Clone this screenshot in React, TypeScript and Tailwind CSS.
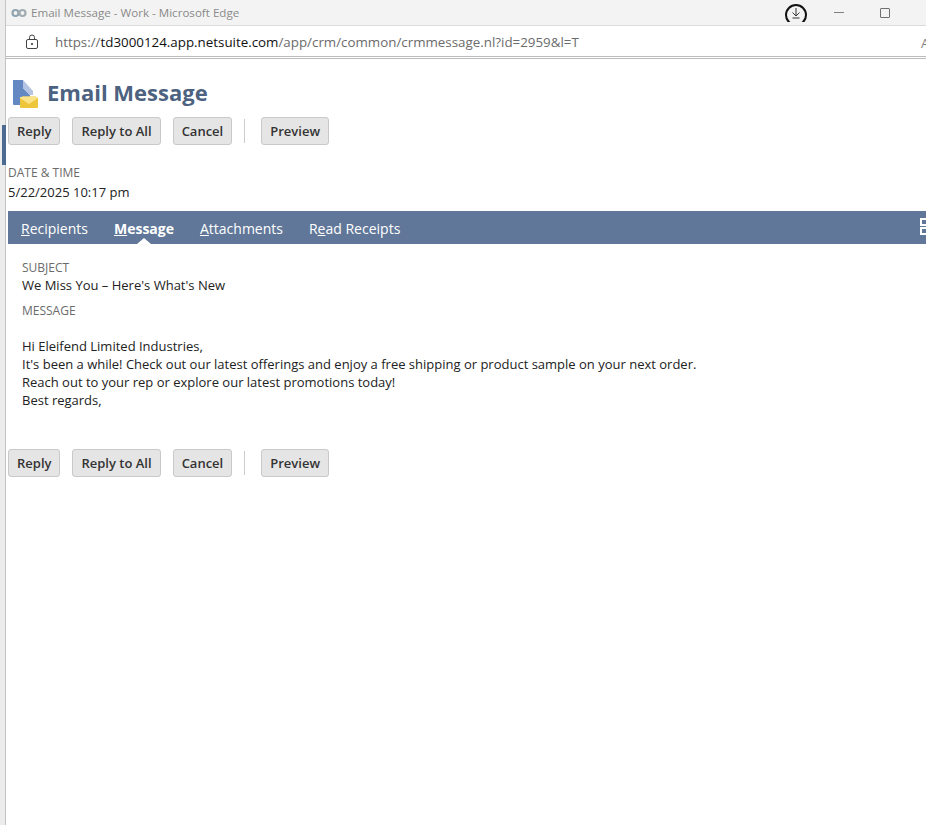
const font = { fontFamily: '"Open Sans", sans-serif' };

function Btn({ label }: { label: string }) {
  return (
    <button className="h-[28px] px-[8px] rounded-[3px] border border-[#c9c9c9] bg-[#e5e5e5] text-[13px] font-semibold text-[#333333] leading-none">
      {label}
    </button>
  );
}

function Toolbar() {
  return (
    <div className="flex items-center pl-[2px]">
      <Btn label="Reply" />
      <div className="w-[12px]" />
      <Btn label="Reply to All" />
      <div className="w-[12px]" />
      <Btn label="Cancel" />
      <div className="w-px h-[24px] bg-[#cccccc] ml-[12px] mr-[16px]" />
      <Btn label="Preview" />
    </div>
  );
}

function FileIcon() {
  return (
    <svg width="26" height="28" viewBox="0 0 26 28" className="shrink-0 mt-[4px]">
      <path d="M0 0H10V8L17 15V17H7V25H1Q0 25 0 24Z" fill="#6388c2" />
      <path d="M10 0L20 11V15H17L10 8Z" fill="#b4c4e2" />
      <path d="M7 18L9.500 16.500H22.500L25 18V27Q25 28 24 28H8Q7 28 7 27Z" fill="#eec63c" />
      <path d="M7 18L9.500 16.500H22.500L25 18L16 24Z" fill="#fce38a" />
    </svg>
  );
}

function Tab({ before, u, after, active }: { before?: string; u: string; after: string; active?: boolean }) {
  return (
    <div className={`relative h-full flex items-center pt-[2px] text-[14px] text-white ${active ? "font-bold" : "font-normal"}`}>
      <span>
        {before}
        <span className="underline">{u}</span>
        {after}
      </span>
      {active && (
        <div className="absolute bottom-0 left-1/2 -translate-x-1/2 w-0 h-0 border-l-[7px] border-r-[7px] border-b-[6px] border-l-transparent border-r-transparent border-b-white" />
      )}
    </div>
  );
}

export default function App() {
  return (
    <div className="relative w-[926px] h-[825px] overflow-hidden bg-white flex" style={font}>
      <div className="w-[6px] shrink-0 bg-[#ececec] border-r border-[#c4c4c4]" />
      <div className="absolute left-[2px] top-[125px] w-[4px] h-[40px] bg-[#4d6a91]" />
      <div className="flex-1 min-w-0 flex flex-col">
        <div className="h-[26px] shrink-0 bg-[#f3f3f3] border-b border-[#dddddd] flex items-center relative">
          <svg width="16" height="10" viewBox="0 0 16 10" className="ml-[5px]">
            <circle cx="4.500" cy="5" r="3" fill="none" stroke="#8fa3b0" strokeWidth="2.200" />
            <circle cx="11.500" cy="5" r="3" fill="none" stroke="#a3acb2" strokeWidth="2.200" />
          </svg>
          <span className="ml-[4px] text-[11.600px] text-[#8a8a8a] whitespace-nowrap">
            Email Message - Work - Microsoft Edge
          </span>
          <div className="flex-1" />
          <svg width="24" height="19" viewBox="0 0 24 19" className="mt-[3px] self-start">
            <circle cx="12" cy="12" r="10" fill="none" stroke="#111111" strokeWidth="2" />
            <path d="M12 5V12.500M8.500 9.500L12 13L15.500 9.500M8.500 15H15.500" fill="none" stroke="#333333" strokeWidth="1" />
          </svg>
          <div className="w-[26px]" />
          <div className="w-[10px] h-px bg-[#808080]" />
          <div className="w-[36px]" />
          <div className="w-[10px] h-[10px] border border-[#707070] rounded-[1px]" />
          <div className="w-[36px]" />
        </div>
        <div className="h-[30px] shrink-0 bg-white flex items-center relative">
          <svg width="14" height="16" viewBox="0 0 14 16" className="ml-[19px] mt-[2px]" fill="none" stroke="#444444">
            <rect x="1.500" y="5.500" width="11" height="9" rx="1.500" />
            <path d="M4.500 5.500V3.500A2.500 2.500 0 0 1 9.500 3.500V5.500" />
            <circle cx="7" cy="10" r="0.700" fill="#444444" />
          </svg>
          <span className="ml-[16px] mt-[3px] text-[13.350px] text-[#6b6b6b] whitespace-nowrap">
            https://<span className="text-[#111111]">td3000124.app.netsuite.com</span>/app/crm/common/crmmessage.nl?id=2959&amp;l=T
          </span>
          <span className="absolute left-[915px] top-[8px] text-[13px] text-[#808080]">A</span>
        </div>
        <div className="h-[3px] shrink-0 border-t border-b border-[#bdbdbd]" />

        <div className="flex items-center h-[36px] mt-[15px] ml-[7px] gap-[8px]">
          <FileIcon />
          <h1 className="text-[22px] font-bold text-[#4d6280] leading-none">Email Message</h1>
        </div>
        <div className="mt-[7px]">
          <Toolbar />
        </div>

        <div className="ml-[2px] mt-[19px]">
          <div className="text-[12px] text-[#6b6b6b] leading-[18px] h-[18px]">DATE &amp; TIME</div>
          <div className="text-[13px] text-[#222222] leading-[18px] h-[18px] mt-[1px]">5/22/2025 10:17 pm</div>
        </div>

        <div className="relative ml-[2px] mt-[10px] h-[33px] bg-[#607799] flex items-center pl-[13px] gap-[26px] shrink-0">
          <Tab u="R" after="ecipients" />
          <Tab u="M" after="essage" active />
          <Tab u="A" after="ttachments" />
          <Tab before="R" u="e" after="ad Receipts" />
          <div className="absolute left-[912px] top-[7px] w-[9px] flex flex-col gap-[1px]">
            <div className="h-[8px] border-2 border-white" />
            <div className="h-[8px] border-2 border-white" />
          </div>
        </div>

        <div className="ml-[16px] mt-[15px]">
          <div className="text-[12px] text-[#6b6b6b] leading-[18px] h-[17px]">SUBJECT</div>
          <div className="text-[13px] text-[#222222] leading-[18px]">We Miss You – Here's What's New</div>
          <div className="text-[12px] text-[#6b6b6b] leading-[18px] mt-[8px]">MESSAGE</div>
          <div className="text-[13px] text-[#222222] leading-[18px] mt-[17px]">
            <p>Hi Eleifend Limited Industries,</p>
            <p>It's been a while! Check out our latest offerings and enjoy a free shipping or product sample on your next order.</p>
            <p>Reach out to your rep or explore our latest promotions today!</p>
            <p>Best regards,</p>
          </div>
        </div>

        <div className="mt-[40px]">
          <Toolbar />
        </div>
      </div>
    </div>
  );
}
